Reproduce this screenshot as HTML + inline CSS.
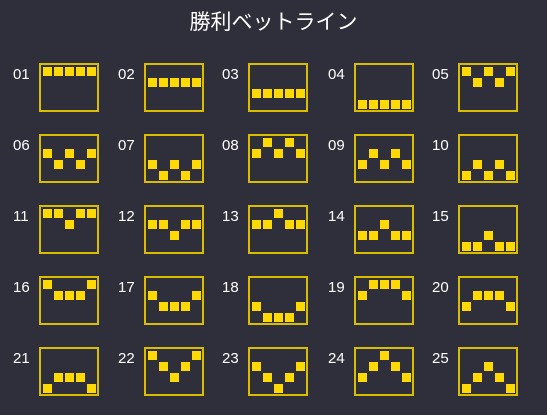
<!DOCTYPE html>
<html><head><meta charset="utf-8"><style>
html,body{margin:0;padding:0;}
body{width:547px;height:415px;background:#2f2f3b;position:relative;overflow:hidden;font-family:"Liberation Sans","Noto Sans CJK JP",sans-serif;color:#fff;}
.t{position:absolute;left:0;width:547px;top:7px;text-align:center;font-size:21px;font-family:"Noto Sans CJK JP",sans-serif;line-height:28px;}
.l{position:absolute;font-size:15px;line-height:18px;width:26px;}
.b{position:absolute;width:56px;height:45px;border:2px solid #d8bd00;box-sizing:content-box;}
.b i{position:absolute;width:9px;height:9px;background:#ffd900;}
.c0{left:2px}.c1{left:13px}.c2{left:24px}.c3{left:35px}.c4{left:46px}
.r0{top:2px}.r1{top:13px}.r2{top:24px}.r3{top:35px}
</style></head><body>
<div class="t">勝利ベットライン</div>

<div class="l" style="left:13px;top:66px">01</div>
<div class="b" style="left:39px;top:63px"><i class="c0 r0"></i><i class="c1 r0"></i><i class="c2 r0"></i><i class="c3 r0"></i><i class="c4 r0"></i></div>
<div class="l" style="left:118px;top:66px">02</div>
<div class="b" style="left:144px;top:63px"><i class="c0 r1"></i><i class="c1 r1"></i><i class="c2 r1"></i><i class="c3 r1"></i><i class="c4 r1"></i></div>
<div class="l" style="left:222px;top:66px">03</div>
<div class="b" style="left:248px;top:63px"><i class="c0 r2"></i><i class="c1 r2"></i><i class="c2 r2"></i><i class="c3 r2"></i><i class="c4 r2"></i></div>
<div class="l" style="left:328px;top:66px">04</div>
<div class="b" style="left:354px;top:63px"><i class="c0 r3"></i><i class="c1 r3"></i><i class="c2 r3"></i><i class="c3 r3"></i><i class="c4 r3"></i></div>
<div class="l" style="left:432px;top:66px">05</div>
<div class="b" style="left:458px;top:63px"><i class="c0 r0"></i><i class="c1 r1"></i><i class="c2 r0"></i><i class="c3 r1"></i><i class="c4 r0"></i></div>

<div class="l" style="left:13px;top:137px">06</div>
<div class="b" style="left:39px;top:134px"><i class="c0 r1"></i><i class="c1 r2"></i><i class="c2 r1"></i><i class="c3 r2"></i><i class="c4 r1"></i></div>
<div class="l" style="left:118px;top:137px">07</div>
<div class="b" style="left:144px;top:134px"><i class="c0 r2"></i><i class="c1 r3"></i><i class="c2 r2"></i><i class="c3 r3"></i><i class="c4 r2"></i></div>
<div class="l" style="left:222px;top:137px">08</div>
<div class="b" style="left:248px;top:134px"><i class="c0 r1"></i><i class="c1 r0"></i><i class="c2 r1"></i><i class="c3 r0"></i><i class="c4 r1"></i></div>
<div class="l" style="left:328px;top:137px">09</div>
<div class="b" style="left:354px;top:134px"><i class="c0 r2"></i><i class="c1 r1"></i><i class="c2 r2"></i><i class="c3 r1"></i><i class="c4 r2"></i></div>
<div class="l" style="left:432px;top:137px">10</div>
<div class="b" style="left:458px;top:134px"><i class="c0 r3"></i><i class="c1 r2"></i><i class="c2 r3"></i><i class="c3 r2"></i><i class="c4 r3"></i></div>

<div class="l" style="left:13px;top:208px">11</div>
<div class="b" style="left:39px;top:205px"><i class="c0 r0"></i><i class="c1 r0"></i><i class="c2 r1"></i><i class="c3 r0"></i><i class="c4 r0"></i></div>
<div class="l" style="left:118px;top:208px">12</div>
<div class="b" style="left:144px;top:205px"><i class="c0 r1"></i><i class="c1 r1"></i><i class="c2 r2"></i><i class="c3 r1"></i><i class="c4 r1"></i></div>
<div class="l" style="left:222px;top:208px">13</div>
<div class="b" style="left:248px;top:205px"><i class="c0 r1"></i><i class="c1 r1"></i><i class="c2 r0"></i><i class="c3 r1"></i><i class="c4 r1"></i></div>
<div class="l" style="left:328px;top:208px">14</div>
<div class="b" style="left:354px;top:205px"><i class="c0 r2"></i><i class="c1 r2"></i><i class="c2 r1"></i><i class="c3 r2"></i><i class="c4 r2"></i></div>
<div class="l" style="left:432px;top:208px">15</div>
<div class="b" style="left:458px;top:205px"><i class="c0 r3"></i><i class="c1 r3"></i><i class="c2 r2"></i><i class="c3 r3"></i><i class="c4 r3"></i></div>

<div class="l" style="left:13px;top:279px">16</div>
<div class="b" style="left:39px;top:276px"><i class="c0 r0"></i><i class="c1 r1"></i><i class="c2 r1"></i><i class="c3 r1"></i><i class="c4 r0"></i></div>
<div class="l" style="left:118px;top:279px">17</div>
<div class="b" style="left:144px;top:276px"><i class="c0 r1"></i><i class="c1 r2"></i><i class="c2 r2"></i><i class="c3 r2"></i><i class="c4 r1"></i></div>
<div class="l" style="left:222px;top:279px">18</div>
<div class="b" style="left:248px;top:276px"><i class="c0 r2"></i><i class="c1 r3"></i><i class="c2 r3"></i><i class="c3 r3"></i><i class="c4 r2"></i></div>
<div class="l" style="left:328px;top:279px">19</div>
<div class="b" style="left:354px;top:276px"><i class="c0 r1"></i><i class="c1 r0"></i><i class="c2 r0"></i><i class="c3 r0"></i><i class="c4 r1"></i></div>
<div class="l" style="left:432px;top:279px">20</div>
<div class="b" style="left:458px;top:276px"><i class="c0 r2"></i><i class="c1 r1"></i><i class="c2 r1"></i><i class="c3 r1"></i><i class="c4 r2"></i></div>

<div class="l" style="left:13px;top:350px">21</div>
<div class="b" style="left:39px;top:347px"><i class="c0 r3"></i><i class="c1 r2"></i><i class="c2 r2"></i><i class="c3 r2"></i><i class="c4 r3"></i></div>
<div class="l" style="left:118px;top:350px">22</div>
<div class="b" style="left:144px;top:347px"><i class="c0 r0"></i><i class="c1 r1"></i><i class="c2 r2"></i><i class="c3 r1"></i><i class="c4 r0"></i></div>
<div class="l" style="left:222px;top:350px">23</div>
<div class="b" style="left:248px;top:347px"><i class="c0 r1"></i><i class="c1 r2"></i><i class="c2 r3"></i><i class="c3 r2"></i><i class="c4 r1"></i></div>
<div class="l" style="left:328px;top:350px">24</div>
<div class="b" style="left:354px;top:347px"><i class="c0 r2"></i><i class="c1 r1"></i><i class="c2 r0"></i><i class="c3 r1"></i><i class="c4 r2"></i></div>
<div class="l" style="left:432px;top:350px">25</div>
<div class="b" style="left:458px;top:347px"><i class="c0 r3"></i><i class="c1 r2"></i><i class="c2 r1"></i><i class="c3 r2"></i><i class="c4 r3"></i></div>
</body></html>
